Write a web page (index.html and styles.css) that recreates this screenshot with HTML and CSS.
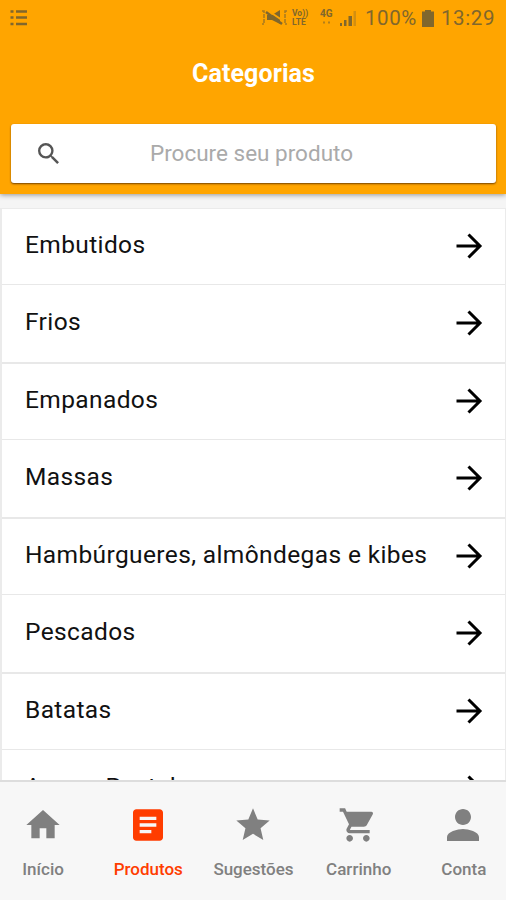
FILE: index.html
```html
<!DOCTYPE html>
<html lang="pt-BR">
<head>
<meta charset="utf-8">
<title>Categorias</title>
<link rel="stylesheet" href="styles.css">
</head>
<body>
<svg class="defs" aria-hidden="true"><symbol id="arrow" viewBox="0 0 28 28"><path d="M1.500 14H25M13.500 2.500L25 14L13.500 25.500" fill="none" stroke="currentColor" stroke-width="3"/></symbol></svg>
<header class="header">
  <div class="status">
    <svg class="status-list" viewBox="0 0 18 18"><path d="M.5 2.500h3M6 2.500h11M.5 8.500h3M6 8.500h11M.5 15h3M6 15h11" stroke="currentColor" stroke-width="2.600"/></svg>
    <svg class="mute" viewBox="0 0 27 18"><path d="M1 2h2v13H1M26 2h-2v13h2" fill="none" stroke="currentColor" stroke-width="1.500" stroke-dasharray="4 1" opacity=".7"/><path d="M6 6h5l8-5v14l-8-4H6z" fill="currentColor"/><path d="M6 1l15 10" stroke="#ffa500" stroke-width="2"/><path d="M5 3l16 12" stroke="currentColor" stroke-width="2.500"/></svg>
    <span class="lte"><span>Vo))</span><span>LTE</span></span>
    <svg class="network" viewBox="0 0 14 20"><text x="0" y="9">4G</text><path d="M3 14.500h2M8 14.500h2" stroke="currentColor" stroke-width="2" opacity=".6"/></svg>
    <svg class="signal" viewBox="0 0 17 17"><path d="M0 13h2v3H0zM4 10h2.500v6H4zM8.500 6H12v10H8.500z" fill="currentColor"/><path d="M13.500 1H16v15h-2.500z" fill="currentColor" opacity=".35"/></svg>
    <span class="percent">100%</span>
    <svg class="battery" viewBox="0 0 12 17"><path d="M3 0h6v1.500h3V17H0V1.500h3z" fill="currentColor"/></svg>
    <span class="clock">13:29</span>
  </div>
  <h1 class="title">Categorias</h1>
  <div class="search">
    <svg class="search-icon" viewBox="3 3 17.500 17.500"><path fill="currentColor" d="M15.500 14h-.79l-.28-.27A6.470 6.470 0 0 0 16 9.500 6.500 6.500 0 1 0 9.500 16c1.610 0 3.090-.59 4.230-1.570l.27.28v.79l5 4.990L20.490 19l-4.990-5zm-6 0C7.010 14 5 11.990 5 9.500S7.010 5 9.500 5 14 7.010 14 9.500 11.990 14 9.500 14z"/></svg>
    <span class="placeholder">Procure seu produto</span>
  </div>
</header>
<main class="content">
  <ul class="list">
    <li class="row"><span>Embutidos</span><svg class="arrow"><use href="#arrow"/></svg></li>
    <li class="row"><span>Frios</span><svg class="arrow"><use href="#arrow"/></svg></li>
    <li class="row"><span>Empanados</span><svg class="arrow"><use href="#arrow"/></svg></li>
    <li class="row"><span>Massas</span><svg class="arrow"><use href="#arrow"/></svg></li>
    <li class="row"><span>Hambúrgueres, almôndegas e kibes</span><svg class="arrow"><use href="#arrow"/></svg></li>
    <li class="row"><span>Pescados</span><svg class="arrow"><use href="#arrow"/></svg></li>
    <li class="row"><span>Batatas</span><svg class="arrow"><use href="#arrow"/></svg></li>
    <li class="row"><span>Aves e Pastel</span><svg class="arrow"><use href="#arrow"/></svg></li>
  </ul>
</main>
<nav class="tabs">
  <div class="tab"><svg class="icon" viewBox="0 0 24 24"><path d="M10 20v-6h4v6h5v-8h3L12 3 2 12h3v8z"/></svg><span>Início</span></div>
  <div class="tab active"><svg class="icon" viewBox="0 0 24 24"><path d="M19 2.500H5c-1.100 0-2 .9-2 2v15c0 1.100.9 2 2 2h14c1.100 0 2-.9 2-2v-15c0-1.100-.9-2-2-2zm-5 14.500H7v-2h7v2zm3-4H7v-2h10v2zm0-4H7V7h10v2z"/></svg><span>Produtos</span></div>
  <div class="tab"><svg class="icon" viewBox="0 0 24 24"><path d="M12 17.270L18.180 21l-1.640-7.030L22 9.240l-7.190-.61L12 2 9.190 8.630 2 9.240l5.460 4.730L5.820 21z"/></svg><span>Sugestões</span></div>
  <div class="tab"><svg class="icon" viewBox="0 0 24 24"><path d="M7 18c-1.100 0-1.990.9-1.990 2S5.900 22 7 22s2-.9 2-2-.9-2-2-2zM1 2v2h2l3.600 7.590-1.350 2.450c-.16.280-.25.610-.25.960 0 1.100.9 2 2 2h12v-2H7.420c-.14 0-.25-.11-.25-.25l.03-.12.9-1.630h7.450c.75 0 1.410-.41 1.750-1.030l3.580-6.490A1 1 0 0 0 20 4H5.210l-.94-2H1zm16 16c-1.100 0-1.990.9-1.990 2s.89 2 1.990 2 2-.9 2-2-.9-2-2-2z"/></svg><span>Carrinho</span></div>
  <div class="tab"><svg class="icon" viewBox="2 2 20 20"><path d="M12 12c2.210 0 4-1.790 4-4s-1.790-4-4-4-4 1.790-4 4 1.790 4 4 4zm0 2c-2.670 0-8 1.340-8 4v2h16v-2c0-2.660-5.330-4-8-4z"/></svg><span>Conta</span></div>
</nav>
</body>
</html>
```
FILE: styles.css
```css
* { box-sizing: border-box; }
body { margin: 0; width: 506px; height: 900px; overflow: hidden; display: flex; flex-direction: column; background: #f5f5f5; font-family: Roboto, "Liberation Sans", sans-serif; color: #111; }
.defs { width: 0; height: 0; position: absolute; }
.header { flex: none; height: 194px; background: #ffa500; box-shadow: 0 1px 5px rgba(0,0,0,.4); display: flex; flex-direction: column; z-index: 1; }
.status { height: 36px; display: flex; align-items: center; padding: 0 10px; color: #80672d; }
.status-list { width: 18px; height: 18px; margin-right: auto; }
.mute { width: 27px; height: 18px; margin-right: 4px; }
.lte { display: flex; flex-direction: column; width: 18px; font-size: 8.500px; line-height: 9px; font-weight: 700; margin-right: 10px; }
.network { width: 14px; height: 20px; margin-right: 6px; font-size: 10px; font-weight: 700; fill: currentColor; }
.signal { width: 17px; height: 17px; margin-right: 8px; }
.percent { font-size: 20.500px; width: 53px; margin-right: 4px; letter-spacing: .6px; }
.battery { width: 12px; height: 17px; margin-right: 7px; }
.clock { font-size: 20.500px; width: 55px; letter-spacing: .6px; }
.title { margin: 0; height: 73px; line-height: 75px; font-size: 25px; font-weight: 700; text-align: center; color: #fff; text-indent: 1px; letter-spacing: .1px; }
.search { margin: 15px 10px 0 11px; height: 59px; background: #fff; border-radius: 3px; box-shadow: 0 1px 2px rgba(80,40,0,.8); display: flex; align-items: center; padding-left: 27px; }
.search-icon { width: 21px; height: 21px; color: #555; }
.placeholder { margin: -2px 0 0 91px; font-size: 22.500px; color: #aaa; }
.content { flex: 1; min-height: 0; overflow: hidden; padding-top: 14px; }
.list { list-style: none; margin: 0; padding: 0; border: solid #ebebeb; border-width: 1px 1px 0 2px; background: #fff; }
.row { border-bottom: 2px solid #e8e8e8; display: flex; align-items: center; justify-content: space-between; padding: 0 22px 1px 23px; font-size: 24.500px; letter-spacing: .38px; }
.row span { margin-top: -3px; }
.row:nth-child(odd) { height: 76.500px; border-bottom: 1px solid #e8e8e8; }
.row:nth-child(even) { height: 78.500px; }
.row:first-child { height: 76px; }
.arrow { width: 28px; height: 28px; color: #000; }
.tabs { flex: none; height: 120px; border-top: 2px solid #ddd; background: #f7f7f7; display: grid; grid-template-columns: repeat(5, 1fr); width: 526px; margin-left: -10px; }
.tab { display: flex; flex-direction: column; align-items: center; padding-top: 23px; color: #808080; font-size: 17px; font-weight: 500; line-height: 20px; }
.tab span { margin-left: 1px; }
.icon { width: 40px; height: 40px; fill: currentColor; margin-bottom: 14px; }
.active { color: #ff3d00; }
```
